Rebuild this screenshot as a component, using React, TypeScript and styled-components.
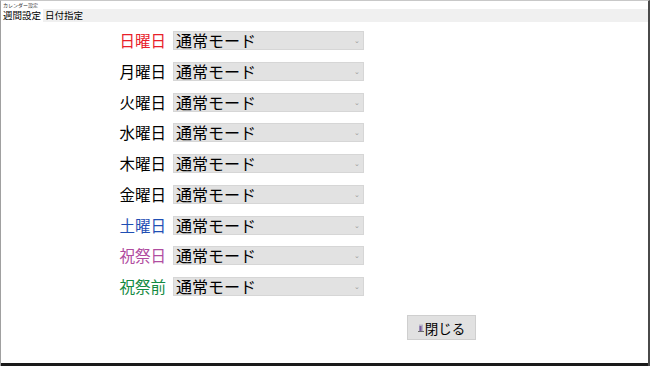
import { Fragment } from "react";
import styled, { createGlobalStyle } from "styled-components";

const GlobalStyle = createGlobalStyle`
  html, body {
    margin: 0;
    padding: 0;
    background: #fff;
  }
  body {
    font-family: "Noto Sans CJK JP", "Noto Sans", sans-serif;
  }
  * {
    box-sizing: border-box;
  }
`;

const Window = styled.div`
  width: 650px;
  height: 366px;
  display: flex;
  flex-direction: column;
  background: #fff;
  border-top: 1px solid #c8c8c8;
  border-left: 1px solid #a0a0a0;
  border-right: 2px solid #4a4a4a;
  overflow: hidden;
`;

const TitleBar = styled.div`
  height: 8px;
  font-size: 5px;
  line-height: 8px;
  padding-left: 2px;
  color: #333;
`;

const TabBar = styled.div`
  height: 13px;
  display: flex;
  background: #f0f0f0;
`;

const Tab = styled.div<{ $active?: boolean }>`
  padding: 0 2px;
  font-size: 9.5px;
  line-height: 13px;
  color: #000;
  background: ${(p) => (p.$active ? "#fff" : "#f0f0f0")};
`;

const Body = styled.div`
  flex: 1;
  display: flex;
  flex-direction: column;
  padding-top: 9px;
`;

const Rows = styled.div`
  display: grid;
  grid-template-columns: 165px 191px;
  column-gap: 7px;
  row-gap: 11.75px;
  grid-auto-rows: 19px;
`;

const Label = styled.div<{ $color: string }>`
  text-align: right;
  font-size: 15.5px;
  line-height: 19px;
  color: ${(p) => p.$color};
`;

const Select = styled.div`
  position: relative;
  background: #e2e2e2;
  border: 1px solid #d6d6d6;
  font-size: 16px;
  line-height: 17px;
  padding-left: 2px;
  color: #000;
`;

const Arrow = styled.span`
  position: absolute;
  right: 3px;
  top: 0;
  font-size: 7px;
  line-height: 17px;
  color: #9a9a9a;
`;

const ButtonRow = styled.div`
  display: flex;
  padding-left: 406px;
  margin-top: 19px;
`;

const CloseButton = styled.div`
  width: 69px;
  height: 25px;
  display: flex;
  align-items: center;
  justify-content: center;
  gap: 1px;
  background: #e1e1e1;
  border: 1px solid #cfcfcf;
  font-size: 13.5px;
  color: #000;
`;

const Taskbar = styled.div`
  height: 3px;
  margin-left: -1px;
  margin-right: -2px;
  background: #1a1a1a;
`;

const days = [
  { name: "日曜日", color: "#e8202a" },
  { name: "月曜日", color: "#000" },
  { name: "火曜日", color: "#000" },
  { name: "水曜日", color: "#000" },
  { name: "木曜日", color: "#000" },
  { name: "金曜日", color: "#000" },
  { name: "土曜日", color: "#1f4fb4" },
  { name: "祝祭日", color: "#b04ca0" },
  { name: "祝祭前", color: "#138a42" },
];

function DoorIcon() {
  return (
    <svg width="6" height="8" viewBox="0 0 6 8">
      <rect x="1" y="0.5" width="4" height="7" fill="#b7b7c8" />
      <rect x="1.5" y="2" width="2" height="5" fill="#7a5aa0" />
      <rect x="0" y="7" width="6" height="1" fill="#6a6a6a" />
    </svg>
  );
}

function App() {
  return (
    <>
      <GlobalStyle />
      <Window>
        <TitleBar>カレンダー設定</TitleBar>
        <TabBar>
          <Tab $active>週間設定</Tab>
          <Tab>日付指定</Tab>
        </TabBar>
        <Body>
          <Rows>
            {days.map((d) => (
              <Fragment key={d.name}>
                <Label $color={d.color}>{d.name}</Label>
                <Select>
                  通常モード
                  <Arrow>⌄</Arrow>
                </Select>
              </Fragment>
            ))}
          </Rows>
          <ButtonRow>
            <CloseButton>
              <DoorIcon />
              閉じる
            </CloseButton>
          </ButtonRow>
        </Body>
        <Taskbar />
      </Window>
    </>
  );
}

export default App;
